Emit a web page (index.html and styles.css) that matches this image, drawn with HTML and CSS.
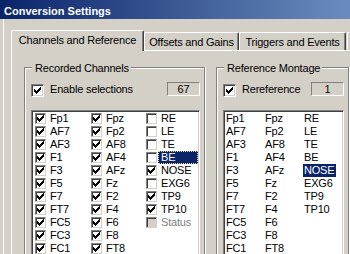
FILE: index.html
```html
<!DOCTYPE html>
<html lang="en">
<head>
    <meta charset="UTF-8">
    <meta name="viewport" content="width=device-width, initial-scale=1.0">
    <title>Conversion Settings</title>
    <link rel="stylesheet" href="styles.css">
</head>
<body>
    <div class="window">
        <div class="titlebar">Conversion Settings</div>
        <div class="client">
            <!-- Tab strip -->
            <div class="tabs">
                <div class="tab tab-channels active">Channels and Reference</div>
                <div class="tab tab-offsets">Offsets and Gains</div>
                <div class="tab tab-triggers">Triggers and Events</div>
                <div class="tab tab-more"></div>
            </div>

            <div class="panel">
                <!-- Recorded Channels -->
                <div class="group group-channels">
                    <div class="group-title">Recorded Channels</div>
                    <div class="group-row">
                        <span class="checkbox checked"></span>
                        <span class="row-label">Enable selections</span>
                        <span class="count">67</span>
                    </div>
                    <div class="listbox">
                        <div class="channel-grid">
                            <div class="item"><span class="mini-check checked"></span><span class="item-text">Fp1</span></div>
                            <div class="item"><span class="mini-check checked"></span><span class="item-text">AF7</span></div>
                            <div class="item"><span class="mini-check checked"></span><span class="item-text">AF3</span></div>
                            <div class="item"><span class="mini-check checked"></span><span class="item-text">F1</span></div>
                            <div class="item"><span class="mini-check checked"></span><span class="item-text">F3</span></div>
                            <div class="item"><span class="mini-check checked"></span><span class="item-text">F5</span></div>
                            <div class="item"><span class="mini-check checked"></span><span class="item-text">F7</span></div>
                            <div class="item"><span class="mini-check checked"></span><span class="item-text">FT7</span></div>
                            <div class="item"><span class="mini-check checked"></span><span class="item-text">FC5</span></div>
                            <div class="item"><span class="mini-check checked"></span><span class="item-text">FC3</span></div>
                            <div class="item"><span class="mini-check checked"></span><span class="item-text">FC1</span></div>

                            <div class="item"><span class="mini-check checked"></span><span class="item-text">Fpz</span></div>
                            <div class="item"><span class="mini-check checked"></span><span class="item-text">Fp2</span></div>
                            <div class="item"><span class="mini-check checked"></span><span class="item-text">AF8</span></div>
                            <div class="item"><span class="mini-check checked"></span><span class="item-text">AF4</span></div>
                            <div class="item"><span class="mini-check checked"></span><span class="item-text">AFz</span></div>
                            <div class="item"><span class="mini-check checked"></span><span class="item-text">Fz</span></div>
                            <div class="item"><span class="mini-check checked"></span><span class="item-text">F2</span></div>
                            <div class="item"><span class="mini-check checked"></span><span class="item-text">F4</span></div>
                            <div class="item"><span class="mini-check checked"></span><span class="item-text">F6</span></div>
                            <div class="item"><span class="mini-check checked"></span><span class="item-text">F8</span></div>
                            <div class="item"><span class="mini-check checked"></span><span class="item-text">FT8</span></div>

                            <div class="item"><span class="mini-check"></span><span class="item-text">RE</span></div>
                            <div class="item"><span class="mini-check"></span><span class="item-text">LE</span></div>
                            <div class="item"><span class="mini-check"></span><span class="item-text">TE</span></div>
                            <div class="item"><span class="mini-check"></span><span class="item-text selected focused">BE</span></div>
                            <div class="item"><span class="mini-check checked"></span><span class="item-text">NOSE</span></div>
                            <div class="item"><span class="mini-check"></span><span class="item-text">EXG6</span></div>
                            <div class="item"><span class="mini-check checked"></span><span class="item-text">TP9</span></div>
                            <div class="item"><span class="mini-check checked"></span><span class="item-text">TP10</span></div>
                            <div class="item disabled"><span class="mini-check"></span><span class="item-text">Status</span></div>
                        </div>
                    </div>
                </div>

                <!-- Reference Montage -->
                <div class="group group-montage">
                    <div class="group-title">Reference Montage</div>
                    <div class="group-row">
                        <span class="checkbox checked"></span>
                        <span class="row-label">Rereference</span>
                        <span class="count">1</span>
                    </div>
                    <div class="listbox">
                        <div class="montage-grid">
                            <span class="montage-item">Fp1</span>
                            <span class="montage-item">AF7</span>
                            <span class="montage-item">AF3</span>
                            <span class="montage-item">F1</span>
                            <span class="montage-item">F3</span>
                            <span class="montage-item">F5</span>
                            <span class="montage-item">F7</span>
                            <span class="montage-item">FT7</span>
                            <span class="montage-item">FC5</span>
                            <span class="montage-item">FC3</span>
                            <span class="montage-item">FC1</span>

                            <span class="montage-item">Fpz</span>
                            <span class="montage-item">Fp2</span>
                            <span class="montage-item">AF8</span>
                            <span class="montage-item">AF4</span>
                            <span class="montage-item">AFz</span>
                            <span class="montage-item">Fz</span>
                            <span class="montage-item">F2</span>
                            <span class="montage-item">F4</span>
                            <span class="montage-item">F6</span>
                            <span class="montage-item">F8</span>
                            <span class="montage-item">FT8</span>

                            <span class="montage-item">RE</span>
                            <span class="montage-item">LE</span>
                            <span class="montage-item">TE</span>
                            <span class="montage-item">BE</span>
                            <span class="montage-item selected">NOSE</span>
                            <span class="montage-item">EXG6</span>
                            <span class="montage-item">TP9</span>
                            <span class="montage-item">TP10</span>
                        </div>
                    </div>
                </div>
            </div>
        </div>
    </div>
</body>
</html>
```

FILE: styles.css
```css
body {
    margin: 0;
    background-color: #d4d0c8;
    font-family: "Liberation Sans", Arial, sans-serif;
    font-size: 11px;
    letter-spacing: -0.2px;
    color: #000;
}
/* the dialog is cut off at the right and bottom, as in the capture */
.window {
    width: 350px;
    height: 254px;
    overflow: hidden;
}
.titlebar {
    height: 16px;
    padding: 3px 0 0 4px;
    line-height: 16px;
    font-weight: bold;
    letter-spacing: 0;
    color: #fff;
    background: linear-gradient(to right, #0a246a 0, #a6caf0 560px);
}
.client {
    box-sizing: border-box;
    height: 235px;
    padding: 11px 0 0 8px;
    border-left: 3px solid #d4d0c8;
    box-shadow: inset 1px 0 0 #fff;
}

/* tabs */
.tabs {
    display: flex;
    align-items: flex-end;
    height: 20px;
}
.tab {
    box-sizing: border-box;
    height: 18px;
    padding: 3px 0 1px;
    line-height: 13px;
    border: 1px solid;
    border-color: #fff #404040 transparent #fff;
    border-bottom: none;
    border-radius: 2px 2px 0 0;
    box-shadow: inset -1px 0 0 #808080;
    background-color: #d4d0c8;
    text-align: center;
    white-space: nowrap;
}
.tab.active {
    height: 21px;
    padding-bottom: 4px;
    margin-bottom: -1px;
    position: relative;
    z-index: 1;
}
.tab-channels { width: 133px; }
.tab-offsets { width: 95px; }
.tab-triggers { width: 107px; }
.tab-more { width: 3px; margin-left: 1px; border-right: none; box-shadow: none; }

.panel {
    box-sizing: border-box;
    display: flex;
    align-items: flex-start;
    gap: 11px;
    height: 204px;
    padding: 16px 0 0 12px;
    border-top: 1px solid #fff;
    border-left: 1px solid #fff;
}

/* group boxes (bottom edge is below the capture) */
.group {
    box-sizing: border-box;
    height: 187px;
    padding: 0 4px 0 6px;
    border: 1px solid #808080;
    border-bottom: none;
    box-shadow: 1px 0 0 #fff, inset 1px 1px 0 #fff;
}
.group-channels { width: 181px; }
.group-montage { width: 133px; }
.group-title {
    width: fit-content;
    margin: -6px 0 0 1px;
    padding: 0 2px 0 3px;
    line-height: 13px;
    background-color: #d4d0c8;
}
.group-row {
    display: flex;
    height: 14px;
    margin-top: 7px;
}
.row-label {
    margin: 1px 0 0 6px;
    line-height: 13px;
}
.count {
    box-sizing: border-box;
    width: 33px;
    height: 14px;
    margin-left: auto;
    border: 1px solid;
    border-color: #808080 #fff #fff #808080;
    line-height: 12px;
    text-align: center;
}

/* checkboxes */
.checkbox {
    box-sizing: border-box;
    flex: none;
    width: 13px;
    height: 13px;
    margin-top: 2px;
    border: 1px solid;
    border-color: #808080 #fff #fff #808080;
    box-shadow: inset 1px 1px 0 #404040, inset -1px -1px 0 #d4d0c8;
    background-color: #fff;
}
.mini-check {
    box-sizing: border-box;
    flex: none;
    width: 11px;
    height: 11px;
    margin: 1px 0 0 2px;
    border: 1px solid;
    border-color: #808080 #d4d0c8 #d4d0c8 #808080;
    box-shadow: inset 1px 1px 0 #404040;
    background-color: #fff;
}
/* 7x7 classic tick, one shadow per pixel */
.checked::after {
    content: '';
    display: block;
    width: 1px;
    height: 1px;
    margin: 1px 0 0 1px;
    box-shadow: 6px 0 #000, 5px 1px #000, 6px 1px #000,
        0 2px #000, 4px 2px #000, 5px 2px #000, 6px 2px #000,
        0 3px #000, 1px 3px #000, 3px 3px #000, 4px 3px #000, 5px 3px #000,
        0 4px #000, 1px 4px #000, 2px 4px #000, 3px 4px #000, 4px 4px #000,
        1px 5px #000, 2px 5px #000, 3px 5px #000, 2px 6px #000;
}
.checkbox.checked::after {
    margin: 2px 0 0 2px;
}

/* list boxes */
.listbox {
    box-sizing: border-box;
    height: 144px;
    margin-top: 14px;
    padding: 1px 1px 0;
    overflow: hidden;
    border: 1px solid;
    border-color: #808080 #fff #fff #808080;
    border-bottom: none;
    box-shadow: inset 1px 1px 0 #404040, inset -1px 0 0 #d4d0c8;
    background-color: #fff;
}
.channel-grid {
    display: grid;
    grid-auto-flow: column;
    grid-template-rows: repeat(11, 13px);
    grid-template-columns: 56px 55px 1fr;
}
.item {
    display: flex;
    line-height: 13px;
    white-space: nowrap;
}
.item-text {
    margin-left: 1px;
    padding: 0 2px 0 3px;
}
.item-text.selected {
    flex: 1;
    color: #fff;
    background-color: #0a246a;
}
.item-text.focused {
    outline: 1px dotted #f0d890;
    outline-offset: -1px;
}
.item.disabled .mini-check {
    background-color: #d4d0c8;
}
.item.disabled .item-text {
    color: #808080;
}

.montage-grid {
    display: grid;
    grid-auto-flow: column;
    grid-template-rows: repeat(11, 13px);
    grid-template-columns: 39px 39px 1fr;
}
.montage-item {
    justify-self: start;
    padding: 0 2px 0 1px;
    line-height: 13px;
}
.montage-item.selected {
    color: #fff;
    background-color: #0a246a;
}
```
